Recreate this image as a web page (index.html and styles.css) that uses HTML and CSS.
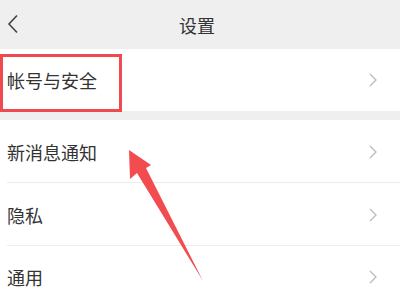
FILE: index.html
```html
<!DOCTYPE html>
<html lang="zh">
<head>
<meta charset="utf-8">
<link rel="stylesheet" href="styles.css">
</head>
<body>
<div class="page">
  <header class="topbar">
    <svg class="back" width="12" height="20" viewBox="0 0 12 20"><path d="M10 1.5 L2 10 L10 18.5" fill="none" stroke="#444" stroke-width="1.6"/></svg>
    <div class="title">设置</div>
  </header>
  <div class="group">
    <div class="row"><span class="label">帐号与安全</span><svg class="chev" width="8" height="14" viewBox="0 0 8 14"><path d="M1 1 L7 7 L1 13" fill="none" stroke="#bbb" stroke-width="1.3"/></svg></div>
  </div>
  <div class="group">
    <div class="row line"><span class="label">新消息通知</span><svg class="chev" width="8" height="14" viewBox="0 0 8 14"><path d="M1 1 L7 7 L1 13" fill="none" stroke="#bbb" stroke-width="1.3"/></svg></div>
    <div class="row line"><span class="label">隐私</span><svg class="chev" width="8" height="14" viewBox="0 0 8 14"><path d="M1 1 L7 7 L1 13" fill="none" stroke="#bbb" stroke-width="1.3"/></svg></div>
    <div class="row"><span class="label">通用</span><svg class="chev" width="8" height="14" viewBox="0 0 8 14"><path d="M1 1 L7 7 L1 13" fill="none" stroke="#bbb" stroke-width="1.3"/></svg></div>
  </div>
  <div class="highlight"></div>
  <svg class="arrow" width="400" height="300" viewBox="0 0 400 300"><polygon points="129,150 151,165 146,168 203,281 137,173 130,179" fill="#f24b50"/></svg>
</div>
</body>
</html>
```
FILE: styles.css
```css
html, body { margin: 0; padding: 0; }
body { font-family: "Noto Sans CJK SC", "Noto Sans", sans-serif; background: #efefef; }
.page { position: relative; width: 400px; height: 300px; overflow: hidden; }
.topbar { height: 49px; background: #efefef; display: flex; align-items: center; justify-content: center; position: relative; }
.back { position: absolute; left: 7px; top: 14px; }
.title { font-size: 18px; color: #333; margin-left: -6px; }
.group { background: #fff; margin-bottom: 9px; }
.row { height: 62px; display: flex; align-items: center; justify-content: space-between; padding: 0 23px 0 7px; position: relative; }
.row.line::after { content: ""; position: absolute; left: 7px; right: 0; bottom: 0; height: 1px; background: #ececec; }
.row.line { height: 63px; box-sizing: border-box; }
.label { font-size: 18px; color: #333; }
.highlight { position: absolute; left: 0; top: 54px; width: 122px; height: 58px; box-sizing: border-box; border: 3px solid #ee4a4f; }
.arrow { position: absolute; left: 0; top: 0; }
```
